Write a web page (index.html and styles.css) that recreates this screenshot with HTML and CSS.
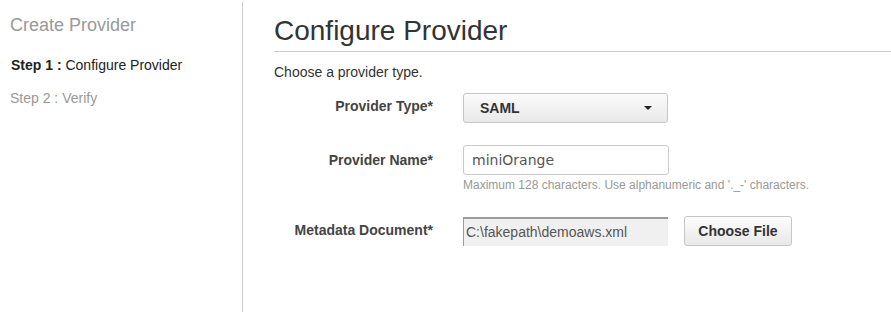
FILE: index.html
```html
<!DOCTYPE html>
<html>
<head>
<meta charset="utf-8">
<link rel="stylesheet" href="styles.css">
</head>
<body>
<div class="page">
  <aside class="sidebar">
    <h2 class="side-title">Create Provider</h2>
    <div class="step step-active"><b>Step 1 :</b> Configure Provider</div>
    <div class="step step-muted">Step 2 : Verify</div>
  </aside>
  <main class="main">
    <h1 class="heading">Configure Provider</h1>
    <p class="intro">Choose a provider type.</p>
    <div class="form">
      <div class="label label-type">Provider Type*</div>
      <div class="control">
        <div class="select"><span>SAML</span><span class="caret"></span></div>
      </div>

      <div class="label">Provider Name*</div>
      <div class="control">
        <div class="input">miniOrange</div>
        <div class="help">Maximum 128 characters. Use alphanumeric and '._-' characters.</div>
      </div>

      <div class="label label-meta">Metadata Document*</div>
      <div class="control file-row">
        <div class="file-box">C:\fakepath\demoaws.xml</div>
        <div class="button">Choose File</div>
      </div>
    </div>
  </main>
</div>
</body>
</html>
```
FILE: styles.css
```css
html, body {
  margin: 0;
  padding: 0;
  background: #fff;
}
body {
  font-family: "Liberation Sans", Arial, sans-serif;
  color: #333;
  width: 891px;
  height: 314px;
  overflow: hidden;
}
.page {
  display: flex;
  align-items: flex-start;
}
.sidebar {
  width: 232px;
  padding-left: 10px;
  margin-top: 2px;
  height: 310px;
  border-right: 1px solid #ccc;
  box-sizing: content-box;
}
.side-title {
  margin: 12px 0 0 0;
  font-size: 18px;
  line-height: 22px;
  font-weight: normal;
  color: #999;
}
.step {
  font-size: 14px;
  line-height: 16px;
}
.step-active {
  margin-top: 21px;
  margin-left: 1px;
  color: #222;
}
.step-active b {
  font-weight: bold;
}
.step-muted {
  margin-top: 17px;
  color: #999;
}
.main {
  flex: 1;
  padding-left: 31px;
}
.heading {
  margin: 15px 0 0 0;
  font-size: 28px;
  line-height: 32px;
  font-weight: normal;
  color: #333;
  padding-bottom: 4px;
  border-bottom: 1px solid #ccc;
}
.intro {
  margin: 12px 0 0 0;
  font-size: 14px;
  line-height: 16px;
  color: #333;
}
.form {
  margin-top: 13px;
  display: grid;
  grid-template-columns: 159px auto;
  column-gap: 30px;
  row-gap: 22px;
}
.label {
  text-align: right;
  font-size: 14px;
  font-weight: bold;
  line-height: 30px;
  color: #444;
}
.label-type {
  line-height: 26px;
}
.label-meta {
  margin-top: 1px;
}
.control {
  display: flex;
  flex-direction: column;
  align-items: flex-start;
}
.select {
  width: 205px;
  height: 30px;
  box-sizing: border-box;
  border: 1px solid #c6c6c6;
  border-radius: 3px;
  background: linear-gradient(#fbfbfb, #e9e9e9);
  display: flex;
  align-items: center;
  justify-content: space-between;
  padding: 0 15px 0 16px;
  font-size: 14px;
  font-weight: bold;
  color: #333;
}
.caret {
  width: 0;
  height: 0;
  border-left: 4px solid transparent;
  border-right: 4px solid transparent;
  border-top: 4px solid #222;
}
.input {
  width: 206px;
  height: 30px;
  box-sizing: border-box;
  border: 1px solid #ccc;
  border-radius: 3px;
  background: #fff;
  padding-left: 8px;
  font-family: "DejaVu Sans", Verdana, sans-serif;
  font-size: 14px;
  line-height: 28px;
  color: #555;
}
.help {
  margin-top: 3px;
  font-size: 12px;
  line-height: 14px;
  color: #999;
}
.file-row {
  flex-direction: row;
  align-items: center;
  gap: 16px;
  margin-top: 2px;
}
.file-box {
  width: 205px;
  height: 29px;
  box-sizing: border-box;
  background: #f0f0f0;
  border-top: 2px solid #9d9d9d;
  border-left: 1px solid #9d9d9d;
  padding-left: 2px;
  font-size: 14px;
  line-height: 27px;
  color: #555;
  margin-top: 1px;
}
.button {
  width: 108px;
  height: 30px;
  box-sizing: border-box;
  border: 1px solid #c6c6c6;
  border-radius: 3px;
  background: linear-gradient(#fdfdfd, #e8e8e8);
  font-size: 14px;
  font-weight: bold;
  color: #333;
  text-align: center;
  line-height: 28px;
}
```
